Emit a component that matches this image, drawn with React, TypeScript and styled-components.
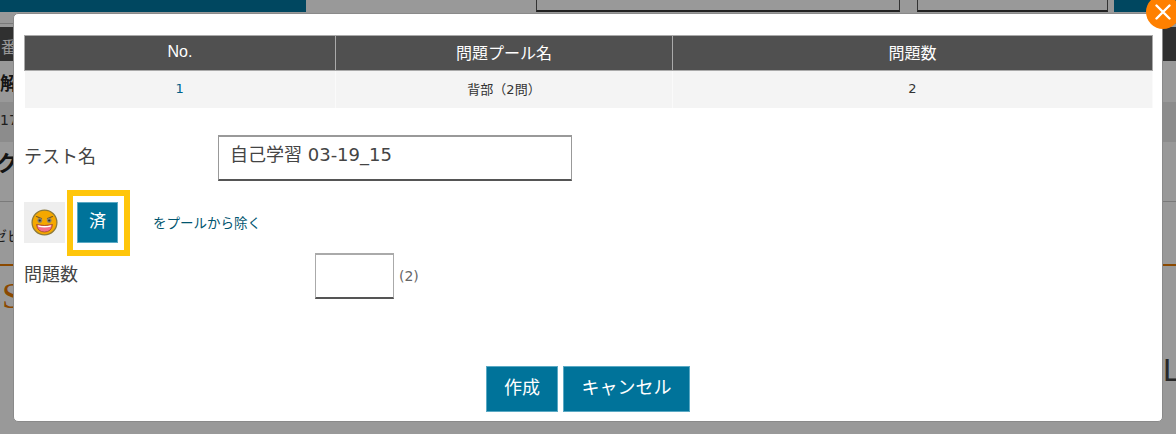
import React from "react";
import styled, { createGlobalStyle } from "styled-components";

const Global = createGlobalStyle`
  html, body { margin: 0; padding: 0; width: 1176px; height: 434px; overflow: hidden; background: #fff; }
  * { box-sizing: border-box; }
  body { font-family: "DejaVu Sans", "Noto Sans CJK JP", sans-serif; color: #333; }
`;

const Page = styled.div`
  position: relative;
  width: 1176px;
  height: 434px;
  overflow: hidden;
  background: #fff;
`;
const TopBar = styled.div`
  display: flex;
  height: 12px;
`;
const TopTeal = styled.div<{ $w: number; $ml?: number }>`
  width: ${(p) => p.$w}px;
  margin-left: ${(p) => p.$ml ?? 0}px;
  background: #0077a0;
`;
const TopButton = styled.div<{ $w: number; $ml: number }>`
  width: ${(p) => p.$w}px;
  margin-left: ${(p) => p.$ml}px;
  border: 1px solid #555;
  border-top: 0;
  border-bottom: 2px solid #383838;
`;
const BgRule = styled.div`
  height: 12px;
  border-bottom: 1px solid #ccc;
  margin-bottom: 3px;
`;
const DarkHead = styled.div`
  height: 34px;
  background: #505050;
  color: #fff;
  font-size: 16px;
  padding: 7px 0 0 1px;
`;
const BgTitle = styled.div`
  height: 41px;
  padding-top: 8px;
  font-size: 18px;
  font-weight: 700;
  color: #222;
`;
const BgBand = styled.div`
  height: 40px;
  padding-top: 10px;
  background: #e9e9e9;
  font-size: 14px;
  color: #333;
`;
const BgHeading = styled.div`
  height: 60px;
  padding-top: 3px;
  border-bottom: 1px solid #ccc;
  font-size: 22px;
  font-weight: 700;
  color: #222;
  text-indent: -4px;
`;
const BgText = styled.div`
  height: 64px;
  padding-top: 23px;
  border-bottom: 2px solid #e87a00;
  font-size: 14px;
  color: #333;
  text-indent: -7px;
`;
const BgBrand = styled.div`
  font-family: "Liberation Serif", serif;
  font-size: 36px;
  line-height: 40px;
  margin-top: 10px;
  color: #e87a00;
  text-indent: -20px;
`;
const BgFooter = styled.div`
  margin-top: 38px;
  padding-left: 1163px;
  font-family: "Liberation Sans", sans-serif;
  font-size: 32px;
  line-height: 32px;
  color: #444;
  white-space: nowrap;
`;
const Overlay = styled.div`
  position: absolute;
  inset: 0;
  background: rgba(0, 0, 0, 0.4);
`;
const Modal = styled.div`
  position: absolute;
  left: 13px;
  top: 13px;
  width: 1150px;
  height: 409px;
  background: #fff;
  border: 1px solid #8a8a8a;
  border-radius: 5px;
  padding: 21px 10px 0;
`;
const CloseBtn = styled.div`
  position: absolute;
  right: -18px;
  top: -19px;
  width: 34px;
  height: 34px;
  border-radius: 50%;
  background: #ff8000;
  display: flex;
  align-items: center;
  justify-content: center;
`;
const Table = styled.table`
  width: 1128px;
  border-collapse: collapse;
  table-layout: fixed;
`;
const Th = styled.th<{ $w: number }>`
  width: ${(p) => p.$w}px;
  height: 35px;
  background: #505050;
  color: #fff;
  font-family: "Liberation Sans", "Noto Sans CJK JP", sans-serif;
  font-size: 16px;
  font-weight: 400;
  border: 1px solid #aaa;
  padding: 0 0 2px;
`;
const Td = styled.td<{ $link?: boolean }>`
  height: 37px;
  background: #f4f4f4;
  font-size: 13px;
  text-align: center;
  color: ${(p) => (p.$link ? "#00628a" : "#333")};
  border-right: 1px solid #fafafa;
  padding: 0 0 2px;
`;
const NameRow = styled.div`
  display: flex;
  align-items: center;
  margin-top: 27px;
  height: 46px;
`;
const FieldLabel = styled.div<{ $w: number }>`
  width: ${(p) => p.$w}px;
  font-size: 18px;
  line-height: 24px;
  color: #444;
  margin-top: -2px;
`;
const NameInput = styled.div`
  width: 354px;
  height: 46px;
  border: 1px solid #999;
  border-top: 2px solid #999;
  border-bottom: 2px solid #555;
  font-size: 18px;
  line-height: 36px;
  padding-left: 11px;
  color: #444;
`;
const StatusRow = styled.div`
  display: flex;
  align-items: center;
  height: 66px;
  margin-top: 9px;
`;
const EmojiBox = styled.div`
  width: 41px;
  height: 41px;
  background: #eee;
  display: flex;
  align-items: center;
  justify-content: center;
`;
const Highlight = styled.div`
  margin-left: 2px;
  width: 63px;
  height: 66px;
  border: 6px solid #ffc60b;
  padding: 6px 4px;
`;
const TealButton = styled.button<{ $w: number; $h: number; $size: number }>`
  display: block;
  width: ${(p) => p.$w}px;
  height: ${(p) => p.$h}px;
  background: #00739a;
  border: 1px solid #5aa9c4;
  color: #fff;
  font-family: inherit;
  font-size: ${(p) => p.$size}px;
  padding: 0 0 6px;
`;
const RemoveLink = styled.a`
  margin-left: 23px;
  margin-top: -1px;
  font-size: 13.5px;
  color: #00556f;
`;
const CountRow = styled.div`
  display: flex;
  align-items: center;
  height: 46px;
  margin-top: -3px;
`;
const CountInput = styled.div`
  width: 79px;
  height: 46px;
  border: 1px solid #aaa;
  border-top: 2px solid #aaa;
  border-bottom: 2px solid #555;
`;
const CountHint = styled.span`
  margin-left: 5px;
  font-size: 14px;
  color: #666;
`;
const Actions = styled.div`
  display: flex;
  justify-content: center;
  gap: 5px;
  margin-top: 67px;
`;

const Emoji = () => (
  <svg width="27" height="27" viewBox="0 0 27 27">
    <circle cx="13.5" cy="13.5" r="12.4" fill="#f5a800" stroke="#8d7a3c" strokeWidth="1.3" />
    <path d="M5.5 7.5 L10.5 9.5 M21.5 7.5 L16.5 9.5" stroke="#7a5a20" strokeWidth="1.2" strokeLinecap="round" />
    <circle cx="8.8" cy="11.5" r="2.4" fill="#8a8270" />
    <circle cx="18.2" cy="11.5" r="2.4" fill="#8a8270" />
    <circle cx="8.8" cy="11.5" r="1.1" fill="#333" />
    <circle cx="18.2" cy="11.5" r="1.1" fill="#333" />
    <path d="M5.5 15.5 Q13.5 17.5 21.5 15.5 Q20.5 23 13.5 23 Q6.5 23 5.5 15.5Z" fill="#f4708c" stroke="#9c4a2a" strokeWidth="0.8" />
    <path d="M7 16.2 Q13.5 18 20 16.2 L19.6 17.8 Q13.5 19.4 7.4 17.8Z" fill="#fff" />
  </svg>
);

export default function App() {
  return (
    <Page>
      <Global />
      <TopBar>
        <TopTeal $w={306} />
        <TopButton $w={364} $ml={230} />
        <TopButton $w={191} $ml={17} />
        <TopTeal $w={62} $ml={6} />
      </TopBar>
      <BgRule />
      <DarkHead>番</DarkHead>
      <BgTitle>解</BgTitle>
      <BgBand>17</BgBand>
      <BgHeading>ク</BgHeading>
      <BgText>ゼビ</BgText>
      <BgBrand>LS</BgBrand>
      <BgFooter>L</BgFooter>
      <Overlay />
      <Modal>
        <CloseBtn>
          <svg width="16" height="16" viewBox="0 0 16 16">
            <path d="M1.5 1.5 L14.5 14.5 M14.5 1.5 L1.5 14.5" stroke="#fff" strokeWidth="2.4" strokeLinecap="round" />
          </svg>
        </CloseBtn>
        <Table>
          <thead>
            <tr>
              <Th $w={311}>No.</Th>
              <Th $w={337}>問題プール名</Th>
              <Th $w={480}>問題数</Th>
            </tr>
          </thead>
          <tbody>
            <tr>
              <Td $link>1</Td>
              <Td>背部（2問）</Td>
              <Td>2</Td>
            </tr>
          </tbody>
        </Table>
        <NameRow>
          <FieldLabel $w={194}>テスト名</FieldLabel>
          <NameInput>自己学習 03-19_15</NameInput>
        </NameRow>
        <StatusRow>
          <EmojiBox><Emoji /></EmojiBox>
          <Highlight>
            <TealButton $w={41} $h={41} $size={17}>済</TealButton>
          </Highlight>
          <RemoveLink>をプールから除く</RemoveLink>
        </StatusRow>
        <CountRow>
          <FieldLabel $w={291}>問題数</FieldLabel>
          <CountInput />
          <CountHint>(2)</CountHint>
        </CountRow>
        <Actions>
          <TealButton $w={72} $h={46} $size={18}>作成</TealButton>
          <TealButton $w={127} $h={46} $size={18}>キャンセル</TealButton>
        </Actions>
      </Modal>
    </Page>
  );
}
